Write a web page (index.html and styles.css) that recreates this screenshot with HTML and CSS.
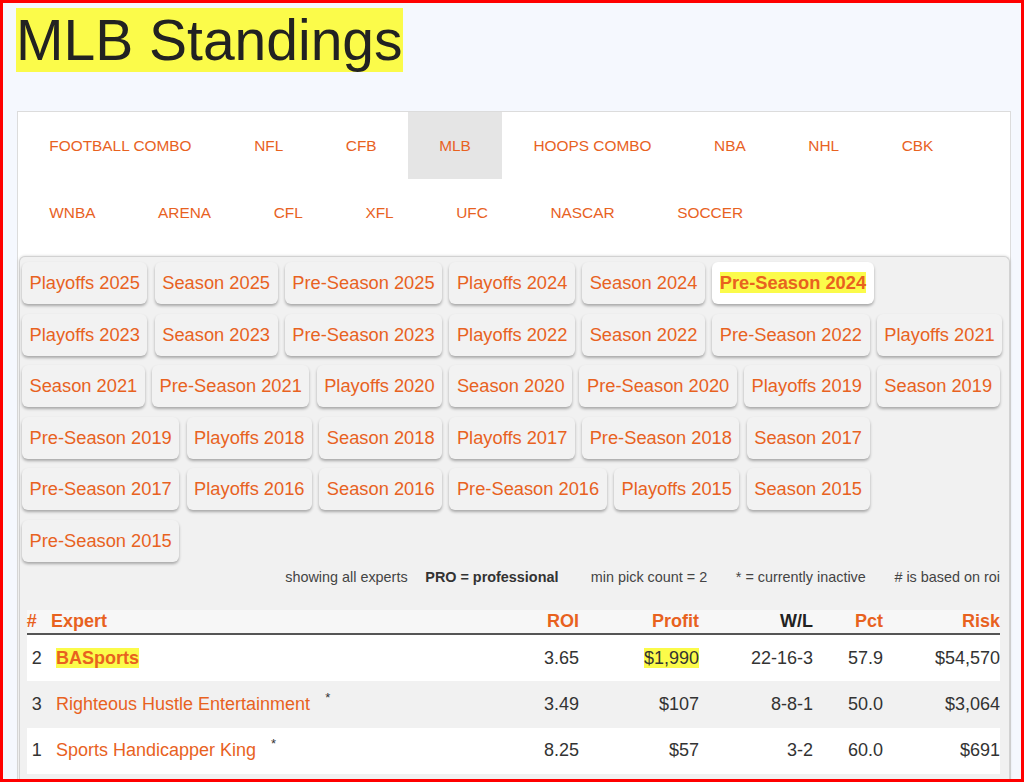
FILE: index.html
```html
<!DOCTYPE html>
<html lang="en">
<head>
<meta charset="utf-8">
<title>MLB Standings</title>
<link rel="stylesheet" href="styles.css">
</head>
<body>
<div class="frame">
  <h1 class="title"><span class="title-hl">MLB Standings</span></h1>
  <div class="card">
    <nav class="tabs">
      <a class="tab" href="#">Football Combo</a>
      <a class="tab" href="#">NFL</a>
      <a class="tab" href="#">CFB</a>
      <a class="tab active" href="#">MLB</a>
      <a class="tab" href="#">Hoops Combo</a>
      <a class="tab" href="#">NBA</a>
      <a class="tab" href="#">NHL</a>
      <a class="tab" href="#">CBK</a>
      <a class="tab" href="#">WNBA</a>
      <a class="tab" href="#">Arena</a>
      <a class="tab" href="#">CFL</a>
      <a class="tab" href="#">XFL</a>
      <a class="tab" href="#">UFC</a>
      <a class="tab" href="#">Nascar</a>
      <a class="tab" href="#">Soccer</a>
    </nav>
    <div class="panel">
      <div class="seasons">
        <a class="season" href="#">Playoffs 2025</a>
        <a class="season" href="#">Season 2025</a>
        <a class="season" href="#">Pre-Season 2025</a>
        <a class="season" href="#">Playoffs 2024</a>
        <a class="season" href="#">Season 2024</a>
        <a class="season current" href="#"><span class="mark">Pre-Season 2024</span></a>
        <span class="row-break"></span>
        <a class="season" href="#">Playoffs 2023</a>
        <a class="season" href="#">Season 2023</a>
        <a class="season" href="#">Pre-Season 2023</a>
        <a class="season" href="#">Playoffs 2022</a>
        <a class="season" href="#">Season 2022</a>
        <a class="season" href="#">Pre-Season 2022</a>
        <a class="season" href="#">Playoffs 2021</a>
        <a class="season" href="#">Season 2021</a>
        <a class="season" href="#">Pre-Season 2021</a>
        <a class="season" href="#">Playoffs 2020</a>
        <a class="season" href="#">Season 2020</a>
        <a class="season" href="#">Pre-Season 2020</a>
        <a class="season" href="#">Playoffs 2019</a>
        <a class="season" href="#">Season 2019</a>
        <a class="season" href="#">Pre-Season 2019</a>
        <a class="season" href="#">Playoffs 2018</a>
        <a class="season" href="#">Season 2018</a>
        <a class="season" href="#">Playoffs 2017</a>
        <a class="season" href="#">Pre-Season 2018</a>
        <a class="season" href="#">Season 2017</a>
        <a class="season" href="#">Pre-Season 2017</a>
        <a class="season" href="#">Playoffs 2016</a>
        <a class="season" href="#">Season 2016</a>
        <a class="season" href="#">Pre-Season 2016</a>
        <a class="season" href="#">Playoffs 2015</a>
        <a class="season" href="#">Season 2015</a>
        <a class="season" href="#">Pre-Season 2015</a>
      </div>
      <div class="legend">
        <span class="legend-item">showing all experts</span>
        <span class="legend-item pro">PRO = professional</span>
        <span class="legend-item min">min pick count = 2</span>
        <span class="legend-item">* = currently inactive</span>
        <span class="legend-item"># is based on roi</span>
      </div>
      <table class="standings">
        <colgroup>
          <col class="c-rank">
          <col class="c-name">
          <col class="c-roi">
          <col class="c-profit">
          <col class="c-wl">
          <col class="c-pct">
          <col class="c-risk">
        </colgroup>
        <thead>
          <tr>
            <th class="left">#</th>
            <th class="left">Expert</th>
            <th>ROI</th>
            <th>Profit</th>
            <th class="dark">W/L</th>
            <th>Pct</th>
            <th>Risk</th>
          </tr>
        </thead>
        <tbody>
          <tr>
            <td class="left">2</td>
            <td class="left"><a class="expert featured" href="#">BASports</a></td>
            <td>3.65</td>
            <td><span class="hl">$1,990</span></td>
            <td>22-16-3</td>
            <td>57.9</td>
            <td>$54,570</td>
          </tr>
          <tr>
            <td class="left">3</td>
            <td class="left"><a class="expert" href="#">Righteous Hustle Entertainment</a><sup class="inactive">*</sup></td>
            <td>3.49</td>
            <td>$107</td>
            <td>8-8-1</td>
            <td>50.0</td>
            <td>$3,064</td>
          </tr>
          <tr>
            <td class="left">1</td>
            <td class="left"><a class="expert" href="#">Sports Handicapper King</a><sup class="inactive">*</sup></td>
            <td>8.25</td>
            <td>$57</td>
            <td>3-2</td>
            <td>60.0</td>
            <td>$691</td>
          </tr>
        </tbody>
      </table>
    </div>
  </div>
</div>
</body>
</html>
```
FILE: styles.css
```css
* { box-sizing: border-box; }

body {
  margin: 0;
  font-family: "Liberation Sans", Arial, sans-serif;
}

.frame {
  height: 782px;
  border: 3px solid #ff0000;
  background: #f5f8fe;
  overflow: hidden;
}

.title {
  margin: 5px 0 0 13px;
  font-size: 57px;
  line-height: 64px;
  font-weight: normal;
  color: #222;
}

.title-hl { background: #fbfb4a; }

.card {
  margin: 39px 10px 0 14px;
  background: #fff;
  border: 1px solid #dcdcdc;
  border-bottom: none;
}

.tabs {
  display: flex;
  flex-wrap: wrap;
}

.tab {
  padding: 0 31.3px;
  line-height: 67px;
  font-size: 15.4px;
  color: #e8621f;
  text-decoration: none;
  text-transform: uppercase;
  white-space: nowrap;
}

.tab.active { background: #e5e5e5; }

.panel {
  margin: 10px 0 0 1px;
  padding: 5px 3px 0 2px;
  min-height: 600px;
  background: #f1f1f1;
  border: 1px solid #d2d2d2;
  border-bottom: none;
  border-radius: 6px 6px 0 0;
  box-shadow: 0 0 3px rgba(0, 0, 0, 0.18);
}

.seasons {
  display: flex;
  flex-wrap: wrap;
  column-gap: 7.3px;
}

.season {
  height: 42px;
  line-height: 42px;
  padding: 0 7.5px;
  margin-bottom: 9.6px;
  font-size: 18.3px;
  color: #e8621f;
  text-decoration: none;
  white-space: nowrap;
  background: #f2f2f2;
  border-radius: 6px;
  box-shadow: 0 2px 3px rgba(0, 0, 0, 0.3);
}

.season.current {
  background: #fff;
  font-weight: bold;
}

.season .mark { background: #fbfb4a; }

.row-break {
  flex-basis: 100%;
  height: 0;
}

.legend {
  display: flex;
  justify-content: flex-end;
  margin-top: -2px;
  padding-right: 6px;
  font-size: 14.4px;
  line-height: 14px;
  color: #444;
  white-space: nowrap;
}

.legend-item + .legend-item { margin-left: 28.6px; }
.legend-item.pro { margin-left: 17.7px; font-weight: bold; color: #333; }
.legend-item.min { margin-left: 32.4px; }

.standings {
  width: calc(100% - 10.7px);
  margin: 26.4px 0 0 4.7px;
  border-collapse: separate;
  border-spacing: 0;
  table-layout: fixed;
  font-size: 18px;
  color: #333;
}

.c-rank { width: 24.3px; }
.c-roi { width: 80px; }
.c-profit { width: 120px; }
.c-wl { width: 114px; }
.c-pct { width: 70px; }
.c-risk { width: 117px; }

.standings th {
  height: 23px;
  line-height: 23px;
  padding: 0;
  text-align: right;
  font-weight: bold;
  color: #e8621f;
  background: #f7f7f7;
  border-bottom: 2px solid #555;
}

.standings th.left { text-align: left; }
.standings th.dark { color: #222; }

.standings td {
  height: 46.3px;
  padding: 0;
  text-align: right;
  white-space: nowrap;
  background: #fff;
}

.standings td.left {
  text-align: left;
  padding-left: 5px;
}

.standings tbody tr:nth-child(even) td { background: #f1f1f1; }

.expert {
  color: #e8621f;
  text-decoration: none;
}

.expert.featured {
  font-weight: bold;
  background: #fbfb4a;
}

.hl { background: #fbfb4a; }

.inactive {
  margin-left: 15px;
  font-size: 13px;
  line-height: 0;
  vertical-align: 8px;
  color: #333;
}
```
